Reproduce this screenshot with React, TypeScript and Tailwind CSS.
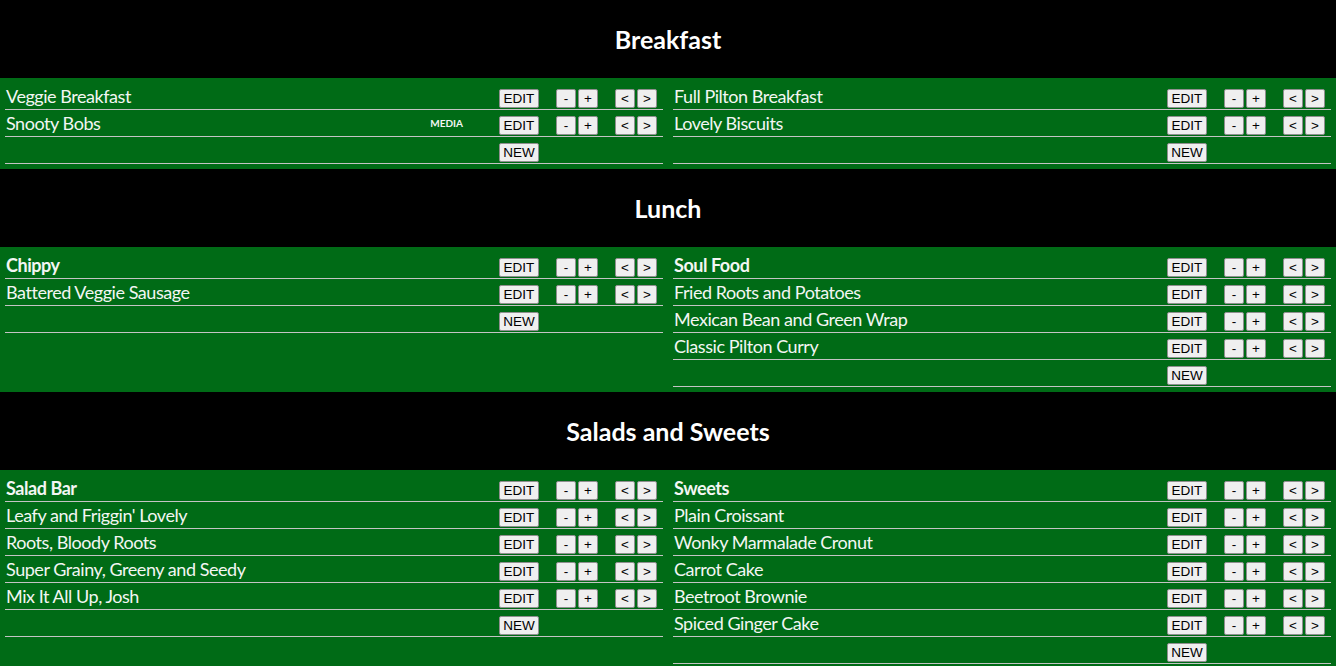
type Item = { name: string; bold?: boolean; media?: boolean };
type Section = { title: string; left: Item[]; right: Item[] };

const sections: Section[] = [
    {
        title: 'Breakfast',
        left: [{ name: 'Veggie Breakfast' }, { name: 'Snooty Bobs', media: true }],
        right: [{ name: 'Full Pilton Breakfast' }, { name: 'Lovely Biscuits' }],
    },
    {
        title: 'Lunch',
        left: [{ name: 'Chippy', bold: true }, { name: 'Battered Veggie Sausage' }],
        right: [
            { name: 'Soul Food', bold: true },
            { name: 'Fried Roots and Potatoes' },
            { name: 'Mexican Bean and Green Wrap' },
            { name: 'Classic Pilton Curry' },
        ],
    },
    {
        title: 'Salads and Sweets',
        left: [
            { name: 'Salad Bar', bold: true },
            { name: "Leafy and Friggin' Lovely" },
            { name: 'Roots, Bloody Roots' },
            { name: 'Super Grainy, Greeny and Seedy' },
            { name: 'Mix It All Up, Josh' },
        ],
        right: [
            { name: 'Sweets', bold: true },
            { name: 'Plain Croissant' },
            { name: 'Wonky Marmalade Cronut' },
            { name: 'Carrot Cake' },
            { name: 'Beetroot Brownie' },
            { name: 'Spiced Ginger Cake' },
        ],
    },
];

const Btn = ({ label, wide }: { label: string; wide?: boolean }) => (
    <button
        className={
            wide
                ? 'w-[40px] h-[19px] self-end mb-[1px] bg-[#efefef] border border-[#8f8f8f] rounded-[2px] text-black text-[13.5px] leading-none font-["Liberation_Sans",Arial,sans-serif] flex items-center justify-center'
                : 'w-[20px] h-[19px] self-end mb-[1px] bg-[#efefef] border border-[#8f8f8f] rounded-[2px] text-black text-[13.5px] leading-none font-["Liberation_Sans",Arial,sans-serif] flex items-center justify-center'
        }
    >
        {label}
    </button>
);

const Row = ({ item }: { item: Item }) => (
    <div className="flex h-[27px] border-b border-[#c4c4c4]">
        <div className={item.bold ? 'flex-1 pl-[1px] text-[18px] leading-[26px] tracking-[-0.45px] font-bold truncate' : 'flex-1 pl-[1px] text-[18px] leading-[26px] tracking-[-0.45px] truncate'}>
            {item.name}
        </div>
        {item.media && <div className="self-center mr-[36px] text-[10px] font-bold leading-none">MEDIA</div>}
        <Btn label="EDIT" wide />
        <div className="w-[17px]" />
        <Btn label="-" />
        <div className="w-[2px]" />
        <Btn label="+" />
        <div className="w-[17px]" />
        <Btn label="<" />
        <div className="w-[2px]" />
        <Btn label=">" />
        <div className="w-[6px]" />
    </div>
);

const Column = ({ items }: { items: Item[] }) => (
    <div className="flex flex-col">
        {items.map((item) => (
            <Row key={item.name} item={item} />
        ))}
        <div className="flex h-[27px] border-b border-[#c4c4c4]">
            <div className="flex-1" />
            <Btn label="NEW" wide />
            <div className="w-[124px]" />
        </div>
    </div>
);

export default function App() {
    return (
        <div className='min-h-screen bg-black text-[#f3f6f3] font-["Lato","Source_Sans_Pro",sans-serif]'>
            {sections.map((section) => (
                <div key={section.title}>
                    <div className="h-[78px] flex items-center justify-center">
                        <h2 className="text-[25px] font-bold leading-[30px] text-white">{section.title}</h2>
                    </div>
                    <div className="bg-[#006b16] px-[5px] py-[5px] grid grid-cols-2 gap-x-[10px] items-start">
                        <Column items={section.left} />
                        <Column items={section.right} />
                    </div>
                </div>
            ))}
        </div>
    );
}
